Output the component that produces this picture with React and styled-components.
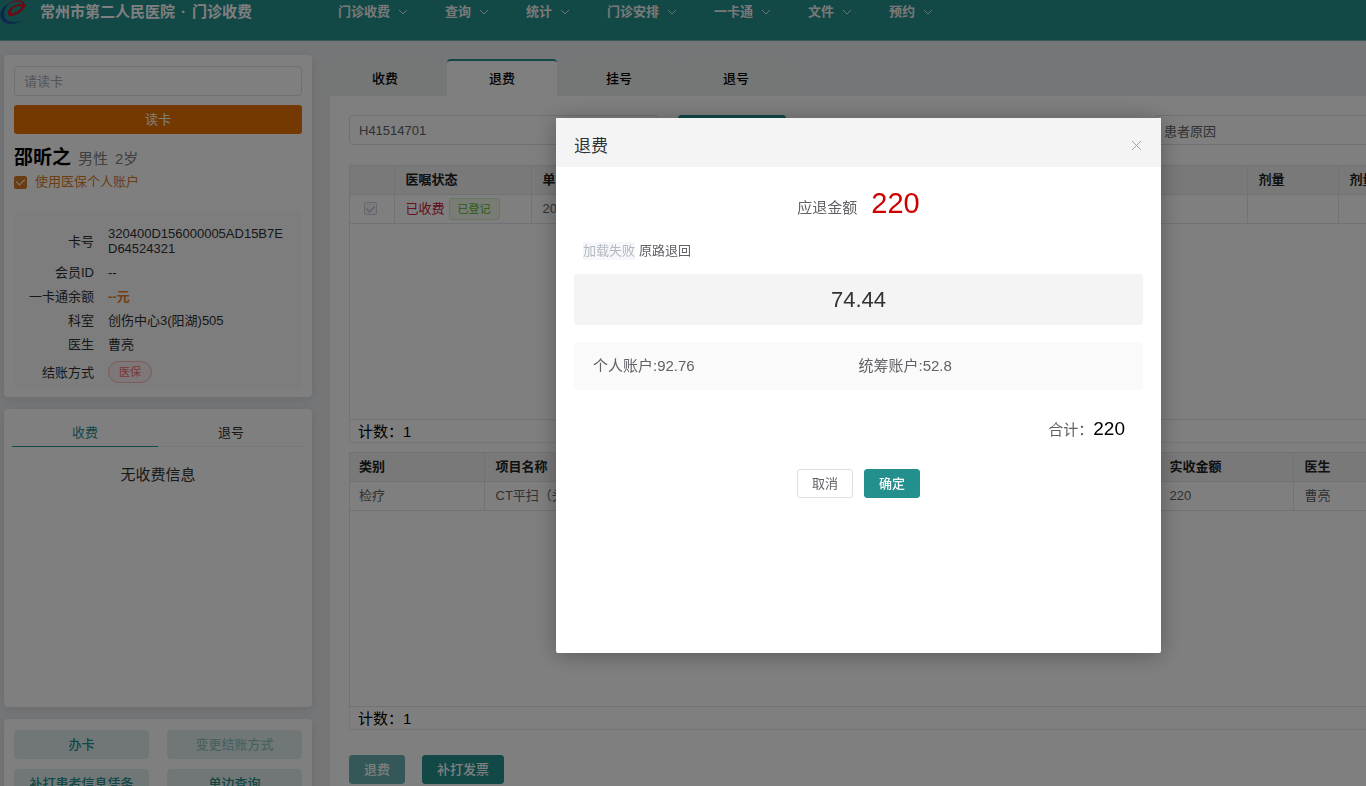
import React from 'react';
import styled, { createGlobalStyle } from 'styled-components';

const teal = '#24908d';

const GlobalStyle = createGlobalStyle`
  * {
    box-sizing: border-box;
  }
  body {
    margin: 0;
    color: #303133;
    background: #ebedf1;
    font: 13px/20px "Liberation Sans", "Noto Sans CJK SC", sans-serif;
  }
  button, input {
    font: inherit;
  }
`

const Page = styled.div`
  display: flex;
  flex-direction: column;
  height: 100vh;
  overflow: hidden;
`

const Header = styled.header`
  display: flex;
  flex-shrink: 0;
  height: 41px;
  background: ${teal};
  border-bottom: 1px solid #6fb5b4;
  color: #fff;
  font-weight: bold;
  line-height: 24px;
`

const Brand = styled.div`
  display: flex;
  gap: 11px;
  width: 338px;
`

const BrandName = styled.div`
  display: flex;
  gap: 6px;
  font-size: 15px;
`

const Nav = styled.nav`
  display: flex;
`

const NavLink = styled.a`
  display: flex;
  align-items: center;
  gap: 8px;
  height: 24px;
  padding-right: 37px;
  color: #f2f2f2;
  text-decoration: none;
`

const Body = styled.div`
  display: flex;
  flex: 1;
  min-height: 0;
`

const Sidebar = styled.aside`
  display: flex;
  flex-direction: column;
  flex-shrink: 0;
  gap: 12px;
  width: 330px;
  padding: 14px 18px 0 4px;
`

const Card = styled.section`
  flex-shrink: 0;
  height: ${props => props.$height || 'auto'};
  padding: ${props => props.$padding || '11px 10px 10px'};
  background: #fff;
  border-radius: 4px;
  box-shadow: 0 2px 11px rgba(0, 0, 0, 0.1);
`

const TextInput = styled.input`
  display: block;
  width: 100%;
  height: 30px;
  padding: 0 9px;
  border: 1px solid #dcdfe6;
  border-radius: 4px;
  background: #fff;
  color: #606266;
  outline: none;
  &::placeholder {
    color: #a8abb2;
  }
`

const ReadButton = styled.button`
  width: 100%;
  height: 29px;
  margin-top: 9px;
  border: 0;
  border-radius: 3px;
  background: #e87200;
  color: #fff;
`

const Patient = styled.div`
  display: flex;
  align-items: baseline;
  gap: 7px;
  margin-top: 11px;
  color: #808080;
  font-size: 15px;
  line-height: 26px;
`

const PatientName = styled.strong`
  color: #000;
  font-size: 19px;
`

const CheckLabel = styled.label`
  display: flex;
  align-items: center;
  gap: 8px;
  color: #d77b26;
`

const Checkbox = styled.input`
  appearance: none;
  width: 13px;
  height: 13px;
  margin: 0;
  display: grid;
  place-items: center;
  border: 1px solid ${props => (props.disabled ? '#cdd0d8' : '#d77b26')};
  border-radius: 2px;
  background: ${props => (props.disabled ? '#f2f6fc' : '#d77b26')};
  &:checked::after {
    content: "";
    width: 4px;
    height: 7px;
    margin-top: -2px;
    border: solid ${props => (props.disabled ? '#a9adb5' : '#fff')};
    border-width: 0 1px 1px 0;
    transform: rotate(45deg);
  }
`

const Info = styled.dl`
  display: grid;
  grid-template-columns: 80px 1fr;
  gap: 9px 14px;
  align-items: center;
  margin: 18px 0 0;
  padding: 16px 18px 6px 0;
  border-radius: 3px;
  background: #fafafa;
  line-height: 15px;
  dt {
    text-align: right;
  }
  dd {
    margin: 0;
    word-break: break-all;
  }
`

const Balance = styled.strong`
  color: #e6812a;
`

const PayTag = styled.span`
  display: inline-block;
  padding: 0 10px;
  border: 1px solid #fab6b6;
  border-radius: 11px;
  background: #fef0f0;
  color: #f56c6c;
  font-size: 11px;
  line-height: 20px;
  vertical-align: top;
`

const SmallTabs = styled.div`
  display: flex;
`

const SmallTab = styled.button`
  flex: 1;
  height: 29px;
  padding: 2px 0 0;
  border: 0;
  border-bottom: ${props => (props.$active ? '1px solid ' + teal : '1px solid #ebeef0')};
  background: none;
  color: ${props => (props.$active ? teal : '#303133')};
`

const Empty = styled.p`
  margin: 18px 0 0;
  text-align: center;
  font-size: 15px;
`

const ActionGrid = styled.div`
  display: grid;
  grid-template-columns: 1fr 1fr;
  gap: 10px 18px;
`

const SoftButton = styled.button`
  height: 29px;
  padding: 0;
  border: 0;
  border-radius: 4px;
  background: #e3efee;
  color: ${teal};
  font-weight: 500;
  &:disabled {
    color: #92c5c3;
  }
`

const Main = styled.main`
  display: flex;
  flex: 1;
  flex-direction: column;
  min-width: 0;
  padding-top: 18px;
`

const Tabs = styled.div`
  display: flex;
  gap: 7px;
`

const Tab = styled.button`
  width: 110px;
  height: 37px;
  padding: 0;
  border: 0;
  border-top: 2px solid ${props => (props.$active ? teal : 'transparent')};
  border-radius: 4px 4px 0 0;
  background: ${props => (props.$active ? '#fff' : '#e8eeec')};
  background-clip: padding-box;
  color: #000;
  font-weight: 500;
`

const Panel = styled.div`
  flex: 1;
  padding: 19px 0 0 19px;
  background: #fff;
  overflow: hidden;
`

const SearchBar = styled.div`
  display: grid;
  grid-template-columns: 309px 108px 328px 300px;
  column-gap: 20px;
  margin-bottom: 20px;
`

const Button = styled.button`
  height: 29px;
  padding: 0 14px;
  border: 1px solid ${props => (props.$plain ? '#dcdfe6' : teal)};
  border-radius: 3px;
  background: ${props => (props.$plain ? '#fff' : teal)};
  color: ${props => (props.$plain ? '#606266' : '#fff')};
  font-weight: ${props => (props.$plain ? 400 : 500)};
  &:disabled {
    border-color: #66b1af;
    background: #66b1af;
  }
`

const TableBox = styled.div`
  height: 255px;
  border: 1px solid #e2e5ea;
  border-right: 0;
  overflow: hidden;
`

const Table = styled.table`
  width: 1200px;
  border-collapse: collapse;
  table-layout: fixed;
  color: #606266;
  th, td {
    height: 29px;
    padding: 0 11px;
    border-right: 1px solid #e2e5ea;
    border-bottom: 1px solid #e2e5ea;
    text-align: left;
    white-space: nowrap;
    overflow: hidden;
  }
  th:first-child, td:first-child {
    padding-left: 9px;
  }
  th {
    height: 28px;
    background: #f2f2f2;
    color: #222;
  }
`

const CheckCell = styled.div`
  display: flex;
  padding-left: 5px;
`

const Status = styled.span`
  color: #c8203c;
`

const DoneTag = styled.span`
  display: inline-block;
  margin-left: 4px;
  padding: 0 8px;
  border: 1px solid #d5edc8;
  border-radius: 3px;
  background: #f0f9eb;
  color: #55b82c;
  font-size: 11px;
  line-height: 20px;
`

const Count = styled.div`
  height: 23px;
  margin-bottom: ${props => props.$gap};
  padding-left: 8px;
  border: solid #e9ebee;
  border-width: 0 0 1px 1px;
  color: #000;
  font-size: 15px;
  line-height: 23px;
`

const Actions = styled.div`
  display: flex;
  gap: 17px;
`

const Overlay = styled.div`
  position: fixed;
  inset: 0;
  display: flex;
  align-items: flex-start;
  justify-content: center;
  padding: 118px 0 0 351px;
  background: rgba(0, 0, 0, 0.5);
`

const Dialog = styled.div`
  width: 605px;
  min-height: 535px;
  border-radius: 2px;
  background: #fff;
  box-shadow: 0 2px 22px rgba(0, 0, 0, 0.3);
`

const DialogHeader = styled.div`
  display: flex;
  align-items: center;
  justify-content: space-between;
  height: 49px;
  padding: 8px 18px 0;
  background: #f4f4f4;
`

const DialogTitle = styled.h2`
  margin: 0;
  font-size: 17px;
  font-weight: normal;
`

const CloseButton = styled.button`
  display: flex;
  padding: 0;
  border: 0;
  background: none;
`

const DialogBody = styled.div`
  padding: 18px;
  color: #606266;
  font-size: 15px;
`

const RefundAmount = styled.div`
  display: flex;
  align-items: baseline;
  justify-content: center;
  gap: 14px;
  line-height: 36px;
`

const RefundNumber = styled.span`
  color: #d00000;
  font-size: 29px;
`

const Channel = styled.div`
  display: flex;
  align-items: center;
  gap: 4px;
  margin-top: 15px;
  padding-left: 9px;
  font-size: 13px;
  line-height: 20px;
`

const LoadFailed = styled.span`
  background: #f5f7fa;
  color: #b4b8c0;
  line-height: 18px;
`

const Amount = styled.div`
  margin-top: 13px;
  border-radius: 3px;
  background: #f4f4f4;
  color: #303133;
  font-size: 22px;
  line-height: 51px;
  text-align: center;
`

const Accounts = styled.div`
  display: grid;
  grid-template-columns: 1fr 1fr;
  margin-top: 17px;
  padding: 0 19px;
  border-radius: 3px;
  background: #fafafa;
  line-height: 48px;
`

const Total = styled.div`
  display: flex;
  align-items: baseline;
  justify-content: flex-end;
  margin-top: 26px;
  padding-right: 18px;
  line-height: 26px;
`

const TotalNumber = styled.span`
  color: #000;
  font-size: 19px;
`

const DialogFooter = styled.div`
  display: flex;
  justify-content: center;
  gap: 11px;
  margin-top: 26px;
  font-size: 13px;
`

const menus = ['门诊收费', '查询', '统计', '门诊安排', '一卡通', '文件', '预约'];
const tabs = ['收费', '退费', '挂号', '退号'];

const Logo = () => (
  <svg width="29" height="26" viewBox="0 0 29 26" aria-hidden="true">
    <path d="M9 3C2 7-1 13 1 18C3 24 11 26 22 21C14 23 7 22 5 18C3 14 4 9 9 3Z" fill="#1b4f9c" />
    <path d="M7 5C11 1 18-1 22 1C27 3 25 9 20 12.500C15 16 9 17.500 8 14C7 10 13 5 19 4C21 4 20 5 18 6C14 7 11 10 11 12.500C12 15 17 12 20 9C23 6 23 3 20 2C16 1 12 2 7 5Z" fill="#d41425" />
    <path d="M18 5C21 4 24 5 27 6C25 7 22 7 20 7Z" fill="#d41425" />
  </svg>
)

const Chevron = () => (
  <svg width="10" height="6" viewBox="0 0 10 6" fill="none" stroke="#d9e8e8" aria-hidden="true">
    <path d="M1 1L5 5L9 1" />
  </svg>
)

function RefundDialog() {
  return (
    <Overlay>
      <Dialog role="dialog" aria-modal="true" aria-labelledby="refund-title">
        <DialogHeader>
          <DialogTitle id="refund-title">退费</DialogTitle>
          <CloseButton type="button" aria-label="关闭">
            <svg width="13" height="13" viewBox="0 0 13 13" fill="none" stroke="#a0a3a9">
              <path d="M2 1L11 10M11 1L2 10" />
            </svg>
          </CloseButton>
        </DialogHeader>
        <DialogBody>
          <RefundAmount>应退金额<RefundNumber>220</RefundNumber></RefundAmount>
          <Channel>
            <LoadFailed>加载失败</LoadFailed>
            <span>原路退回</span>
          </Channel>
          <Amount>74.44</Amount>
          <Accounts>
            <span>个人账户:92.76</span>
            <span>统筹账户:52.8</span>
          </Accounts>
          <Total>合计：<TotalNumber>220</TotalNumber></Total>
          <DialogFooter>
            <Button type="button" $plain>取消</Button>
            <Button type="button">确定</Button>
          </DialogFooter>
        </DialogBody>
      </Dialog>
    </Overlay>
  )
}

function App() {
  return (
    <Page>
      <GlobalStyle />
      <Header>
        <Brand>
          <Logo />
          <BrandName>
            <span>常州市第二人民医院</span>
            <span>·</span>
            <span>门诊收费</span>
          </BrandName>
        </Brand>
        <Nav>
          {menus.map(name => (
            <NavLink href="#" key={name}>{name}<Chevron /></NavLink>
          ))}
        </Nav>
      </Header>
      <Body>
        <Sidebar>
          <Card $height="342px">
            <TextInput placeholder="请读卡" aria-label="请读卡" />
            <ReadButton type="button">读卡</ReadButton>
            <Patient>
              <PatientName>邵昕之</PatientName>
              <span>男性</span>
              <span>2岁</span>
            </Patient>
            <CheckLabel>
              <Checkbox type="checkbox" defaultChecked />
              使用医保个人账户
            </CheckLabel>
            <Info>
              <dt>卡号</dt>
              <dd>320400D156000005AD15B7ED64524321</dd>
              <dt>会员ID</dt>
              <dd>--</dd>
              <dt>一卡通余额</dt>
              <dd><Balance>--元</Balance></dd>
              <dt>科室</dt>
              <dd>创伤中心3(阳湖)505</dd>
              <dt>医生</dt>
              <dd>曹亮</dd>
              <dt>结账方式</dt>
              <dd><PayTag>医保</PayTag></dd>
            </Info>
          </Card>
          <Card $height="298px" $padding="9px 8px">
            <SmallTabs>
              <SmallTab type="button" $active>收费</SmallTab>
              <SmallTab type="button">退号</SmallTab>
            </SmallTabs>
            <Empty>无收费信息</Empty>
          </Card>
          <Card>
            <ActionGrid>
              <SoftButton type="button">办卡</SoftButton>
              <SoftButton type="button" disabled>变更结账方式</SoftButton>
              <SoftButton type="button">补打患者信息凭条</SoftButton>
              <SoftButton type="button">单边查询</SoftButton>
            </ActionGrid>
          </Card>
        </Sidebar>
        <Main>
          <Tabs>
            {tabs.map(name => (
              <Tab type="button" key={name} $active={name === '退费'}>{name}</Tab>
            ))}
          </Tabs>
          <Panel>
            <SearchBar>
              <TextInput defaultValue="H41514701" aria-label="单号" />
              <Button type="button" aria-label="查询" />
              <span />
              <TextInput defaultValue="患者原因" aria-label="退费原因" />
            </SearchBar>
            <TableBox>
              <Table>
                <colgroup>
                  <col style={{ width: 44 }} />
                  <col style={{ width: 137 }} />
                  <col style={{ width: 716 }} />
                  <col style={{ width: 91 }} />
                  <col />
                </colgroup>
                <thead>
                  <tr>
                    <th />
                    <th>医嘱状态</th>
                    <th>单</th>
                    <th>剂量</th>
                    <th>剂量</th>
                  </tr>
                </thead>
                <tbody>
                  <tr>
                    <td>
                      <CheckCell>
                        <Checkbox type="checkbox" checked disabled aria-label="选择" />
                      </CheckCell>
                    </td>
                    <td><Status>已收费</Status><DoneTag>已登记</DoneTag></td>
                    <td>20</td>
                    <td />
                    <td />
                  </tr>
                </tbody>
              </Table>
            </TableBox>
            <Count $gap="9px">计数：1</Count>
            <TableBox>
              <Table>
                <colgroup>
                  <col style={{ width: 134 }} />
                  <col style={{ width: 674 }} />
                  <col style={{ width: 135 }} />
                  <col />
                </colgroup>
                <thead>
                  <tr>
                    <th>类别</th>
                    <th>项目名称</th>
                    <th>实收金额</th>
                    <th>医生</th>
                  </tr>
                </thead>
                <tbody>
                  <tr>
                    <td>检疗</td>
                    <td>CT平扫（头</td>
                    <td>220</td>
                    <td>曹亮</td>
                  </tr>
                </tbody>
              </Table>
            </TableBox>
            <Count $gap="25px">计数：1</Count>
            <Actions>
              <Button type="button" disabled>退费</Button>
              <Button type="button">补打发票</Button>
            </Actions>
          </Panel>
        </Main>
      </Body>
      <RefundDialog />
    </Page>
  );
}

export default App;
